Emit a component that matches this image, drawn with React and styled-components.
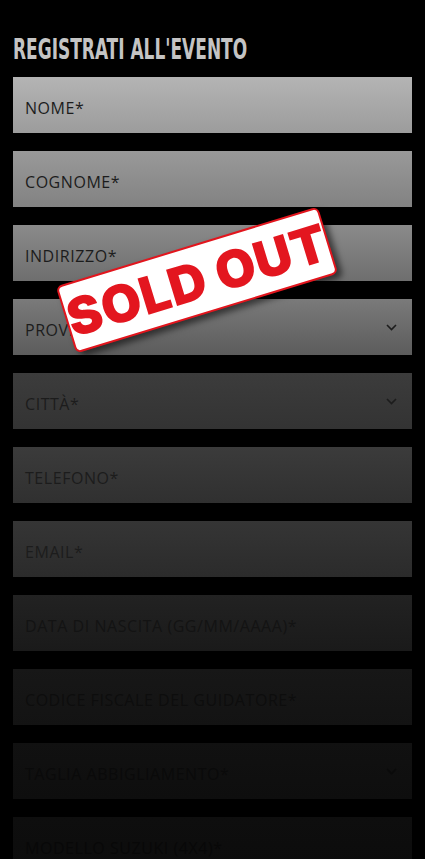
import React from 'react';
import styled, { createGlobalStyle } from 'styled-components';

const GlobalStyle = createGlobalStyle`
  html, body {
    margin: 0;
    padding: 0;
    background: #000;
  }
  #root {
    height: 859px;
    overflow: hidden;
  }
`

const Page = styled.div`
  position: relative;
  padding: 0 13px;
  background: #000;
  min-height: 859px;
  box-sizing: border-box;
`

const Title = styled.h2`
  margin: 0;
  padding-top: 36px;
  height: 77px;
  box-sizing: border-box;
  font-family: "DejaVu Sans Condensed", "Liberation Sans Narrow", "Liberation Sans", sans-serif;
  font-weight: 700;
  font-size: 28px;
  line-height: 1;
  color: #c4c4c4;
  white-space: nowrap;
  transform: scaleX(0.675);
  transform-origin: left top;
`

const Form = styled.div`
  display: flex;
  flex-direction: column;
  gap: 18px;
`

const Field = styled.div`
  height: 56px;
  box-sizing: border-box;
  padding: 6px 15px 0 12px;
  display: flex;
  align-items: center;
  justify-content: space-between;
  background: linear-gradient(to bottom, ${(p) => p.$top}, ${(p) => p.$bottom});
  color: ${(p) => p.$ink};
`

const Label = styled.span`
  font-family: "Open Sans", "DejaVu Sans", sans-serif;
  font-size: 16px;
  letter-spacing: 0.55px;
  text-transform: uppercase;
`

const Chevron = styled.svg`
  width: 11px;
  height: 7px;
  margin-top: -6px;
`

const Stamp = styled.div`
  position: absolute;
  left: 60px;
  top: 245px;
  width: 274px;
  height: 70px;
  box-sizing: border-box;
  background: #fff;
  border: 2px solid #e2151d;
  border-radius: 6px;
  box-shadow: 4px 5px 6px rgba(0, 0, 0, 0.55);
  transform: rotate(-17deg);
  display: flex;
  align-items: center;
  justify-content: center;
  font-family: "Inter", "Noto Sans", sans-serif;
  font-weight: 900;
  font-size: 52px;
  color: #e3161f;
  letter-spacing: 0.5px;
`

const hex = (v) => {
  const h = Math.round(v).toString(16).padStart(2, '0');
  return `#${h}${h}${h}`;
}

const fields = [
  { label: 'Nome*', top: 0xb4, bottom: 0x9c },
  { label: 'Cognome*', top: 0x99, bottom: 0x82 },
  { label: 'Indirizzo*', top: 0x8a, bottom: 0x6e },
  { label: 'Provincia*', top: 0x7a, bottom: 0x5c, select: true },
  { label: 'Città*', top: 0x3c, bottom: 0x33, select: true },
  { label: 'Telefono*', top: 0x3b, bottom: 0x30 },
  { label: 'Email*', top: 0x35, bottom: 0x2b },
  { label: 'Data di nascita (gg/mm/aaaa)*', top: 0x22, bottom: 0x1a },
  { label: 'Codice fiscale del guidatore*', top: 0x17, bottom: 0x13 },
  { label: 'Taglia abbigliamento*', top: 0x11, bottom: 0x0e, select: true },
  { label: 'Modello Suzuki (4x4)*', top: 0x0e, bottom: 0x0c },
]

const App = () => {
  return (
    <>
      <GlobalStyle />
      <Page>
        <Title>REGISTRATI ALL'EVENTO</Title>
        <Form>
          {fields.map((f) => {
            const mid = (f.top + f.bottom) / 2;
            const ink = hex(Math.min(0x1c, mid * 0.62));
            return (
              <Field key={f.label} $top={hex(f.top)} $bottom={hex(f.bottom)} $ink={ink}>
                <Label>{f.label}</Label>
                {f.select && (
                  <Chevron viewBox="0 0 11 7">
                    <polyline points="1,1 5.5,5.5 10,1" fill="none" stroke={ink} strokeWidth="1.6" />
                  </Chevron>
                )}
              </Field>
            );
          })}
        </Form>
        <Stamp>SOLD OUT</Stamp>
      </Page>
    </>
  );
}

export default App;
